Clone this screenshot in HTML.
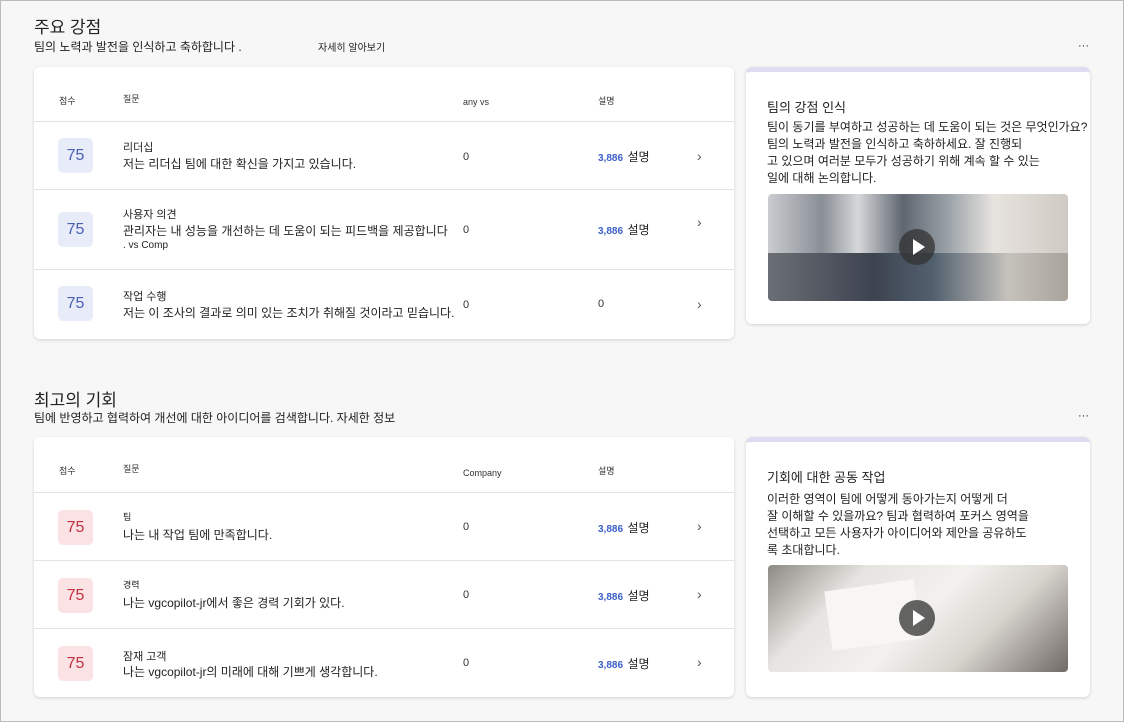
<!DOCTYPE html>
<html><head><meta charset="utf-8"><style>
*{box-sizing:border-box;margin:0;padding:0}
body{width:1124px;height:722px;background:#f7f7f7;font-family:"Liberation Sans","Noto Sans CJK KR",sans-serif;color:#222;position:relative;overflow:hidden}
.frame{position:absolute;left:0;top:0;width:1124px;height:722px;border:1px solid #bbb}
.abs{position:absolute;white-space:nowrap}
.h1{font-size:17px;color:#222}
.sub{font-size:12px}
.card{position:absolute;background:#fff;border-radius:6px;box-shadow:0 1px 3px rgba(0,0,0,.15)}
.hdr{position:absolute;font-size:9px;color:#333}
.row{position:absolute;left:0;right:0;border-top:1px solid #e3e3e3}
.badge{position:absolute;left:24px;width:35px;height:35px;border-radius:5px;font-size:16px;display:flex;align-items:center;justify-content:center}
.blue{background:#e8ecf8;color:#4a5fb8}
.red{background:#fbe2e5;color:#c4313f}
.t1{position:absolute;left:89px;font-size:11px}
.t2{position:absolute;left:89px;font-size:12px}
.num{font-size:11px;color:#333}
.lk{font-size:10px;color:#3b5fc8;font-weight:bold}
.chev{position:absolute;left:663px;font-size:14px;color:#555}
.rc{position:absolute;background:#fff;border-radius:6px;box-shadow:0 1px 3px rgba(0,0,0,.15);border-top:5px solid #dfdcf1}
.rt{font-size:13px;position:absolute;left:21px}
.rp{font-size:12px;line-height:17px;position:absolute;left:21px;white-space:nowrap}
.img{position:absolute;left:22px;width:300px;height:107px;border-radius:4px;overflow:hidden}
.play{position:absolute;left:131px;top:35px;width:36px;height:36px;border-radius:50%;background:rgba(50,50,50,.75)}
.play:after{content:"";position:absolute;left:14px;top:10px;border-left:12px solid #fff;border-top:8px solid transparent;border-bottom:8px solid transparent}
</style></head><body>
<div class="frame"></div>
<div class="abs h1" style="left:34px;top:13px">주요 강점</div>
<div class="abs sub" style="left:34px;top:38px">팀의 노력과 발전을 인식하고 축하합니다 .</div>
<div class="abs" style="left:318px;top:39px;font-size:10px">자세히 알아보기</div>
<div class="abs" style="left:1078px;top:40px;font-size:11px">···</div>

<div class="card" style="left:34px;top:67px;width:700px;height:272px">
 <div class="hdr" style="left:25px;top:27px">점수</div>
 <div class="hdr" style="left:89px;top:25px">질문</div>
 <div class="hdr" style="left:429px;top:30px">any vs</div>
 <div class="hdr" style="left:564px;top:27px">설명</div>
 <div class="row" style="top:54px;height:68px">
  <div class="badge blue" style="top:16px">75</div>
  <div class="t1" style="top:17px">리더십</div>
  <div class="t2" style="top:33px">저는 리더십 팀에 대한 확신을 가지고 있습니다.</div>
  <div class="abs num" style="left:429px;top:29px">0</div>
  <div class="abs" style="left:564px;top:26px"><span class="lk">3,886</span> <span style="font-size:12px">설명</span></div>
  <div class="chev" style="top:26px">›</div>
 </div>
 <div class="row" style="top:122px;height:80px">
  <div class="badge blue" style="top:22px">75</div>
  <div class="t1" style="top:16px">사용자 의견</div>
  <div class="t2" style="top:32px">관리자는 내 성능을 개선하는 데 도움이 되는 피드백을 제공합니다</div>
  <div class="t1" style="top:50px;font-size:10px">. vs Comp</div>
  <div class="abs num" style="left:429px;top:34px">0</div>
  <div class="abs" style="left:564px;top:31px"><span class="lk">3,886</span> <span style="font-size:12px">설명</span></div>
  <div class="chev" style="top:24px">›</div>
 </div>
 <div class="row" style="top:202px;height:70px">
  <div class="badge blue" style="top:16px">75</div>
  <div class="t1" style="top:18px">작업 수행</div>
  <div class="t2" style="top:34px">저는 이 조사의 결과로 의미 있는 조치가 취해질 것이라고 믿습니다.</div>
  <div class="abs num" style="left:429px;top:29px">0</div>
  <div class="abs num" style="left:564px;top:28px">0</div>
  <div class="chev" style="top:26px">›</div>
 </div>
</div>

<div class="rc" style="left:746px;top:67px;width:344px;height:257px">
 <div class="rt" style="top:25px">팀의 강점 인식</div>
 <div class="rp" style="top:47px">팀이 동기를 부여하고 성공하는 데 도움이 되는 것은 무엇인가요?<br>팀의 노력과 발전을 인식하고 축하하세요. 잘 진행되<br>고 있으며 여러분 모두가 성공하기 위해 계속 할 수 있는<br>일에 대해 논의합니다.</div>
 <div class="img" style="top:122px;background:linear-gradient(90deg,#c9ccd0 0%,#8a8f96 18%,#d6d8da 30%,#5f6670 45%,#9aa2a8 60%,#e7e3df 75%,#cfcac3 100%)">
  <div style="position:absolute;left:0;bottom:0;width:100%;height:45%;background:linear-gradient(90deg,#6b6f75,#3d4350 35%,#52606e 55%,#c5c2bc 80%,#a9a39b)"></div>
  <div class="play"></div></div>
</div>

<div class="abs h1" style="left:34px;top:386px">최고의 기회</div>
<div class="abs sub" style="left:34px;top:409px">팀에 반영하고 협력하여 개선에 대한 아이디어를 검색합니다. 자세한 정보</div>
<div class="abs" style="left:1078px;top:410px;font-size:11px">···</div>

<div class="card" style="left:34px;top:437px;width:700px;height:260px">
 <div class="hdr" style="left:25px;top:27px">점수</div>
 <div class="hdr" style="left:89px;top:25px">질문</div>
 <div class="hdr" style="left:429px;top:31px">Company</div>
 <div class="hdr" style="left:564px;top:27px">설명</div>
 <div class="row" style="top:55px;height:68px">
  <div class="badge red" style="top:17px">75</div>
  <div class="t1" style="top:17px;font-size:9px">팀</div>
  <div class="t2" style="top:33px">나는 내 작업 팀에 만족합니다.</div>
  <div class="abs num" style="left:429px;top:28px">0</div>
  <div class="abs" style="left:564px;top:26px"><span class="lk">3,886</span> <span style="font-size:12px">설명</span></div>
  <div class="chev" style="top:25px">›</div>
 </div>
 <div class="row" style="top:123px;height:68px">
  <div class="badge red" style="top:17px">75</div>
  <div class="t1" style="top:17px;font-size:9px">경력</div>
  <div class="t2" style="top:33px">나는 vgcopilot-jr에서 좋은 경력 기회가 있다.</div>
  <div class="abs num" style="left:429px;top:28px">0</div>
  <div class="abs" style="left:564px;top:26px"><span class="lk">3,886</span> <span style="font-size:12px">설명</span></div>
  <div class="chev" style="top:25px">›</div>
 </div>
 <div class="row" style="top:191px;height:69px">
  <div class="badge red" style="top:17px">75</div>
  <div class="t1" style="top:19px">잠재 고객</div>
  <div class="t2" style="top:34px">나는 vgcopilot-jr의 미래에 대해 기쁘게 생각합니다.</div>
  <div class="abs num" style="left:429px;top:28px">0</div>
  <div class="abs" style="left:564px;top:26px"><span class="lk">3,886</span> <span style="font-size:12px">설명</span></div>
  <div class="chev" style="top:25px">›</div>
 </div>
</div>

<div class="rc" style="left:746px;top:437px;width:344px;height:260px">
 <div class="rt" style="top:25px">기회에 대한 공동 작업</div>
 <div class="rp" style="top:49px">이러한 영역이 팀에 어떻게 동아가는지 어떻게 더<br>잘 이해할 수 있을까요? 팀과 협력하여 포커스 영역을<br>선택하고 모든 사용자가 아이디어와 제안을 공유하도<br>록 초대합니다.</div>
 <div class="img" style="top:123px;background:linear-gradient(135deg,#8d8a86 0%,#e6e4e0 25%,#f2f1ee 50%,#d9d5cf 70%,#6f6a66 100%)">
  <div style="position:absolute;left:60px;top:20px;width:90px;height:60px;background:#f7f6f3;transform:rotate(-8deg)"></div>
  <div class="play"></div></div>
</div>
</body></html>
